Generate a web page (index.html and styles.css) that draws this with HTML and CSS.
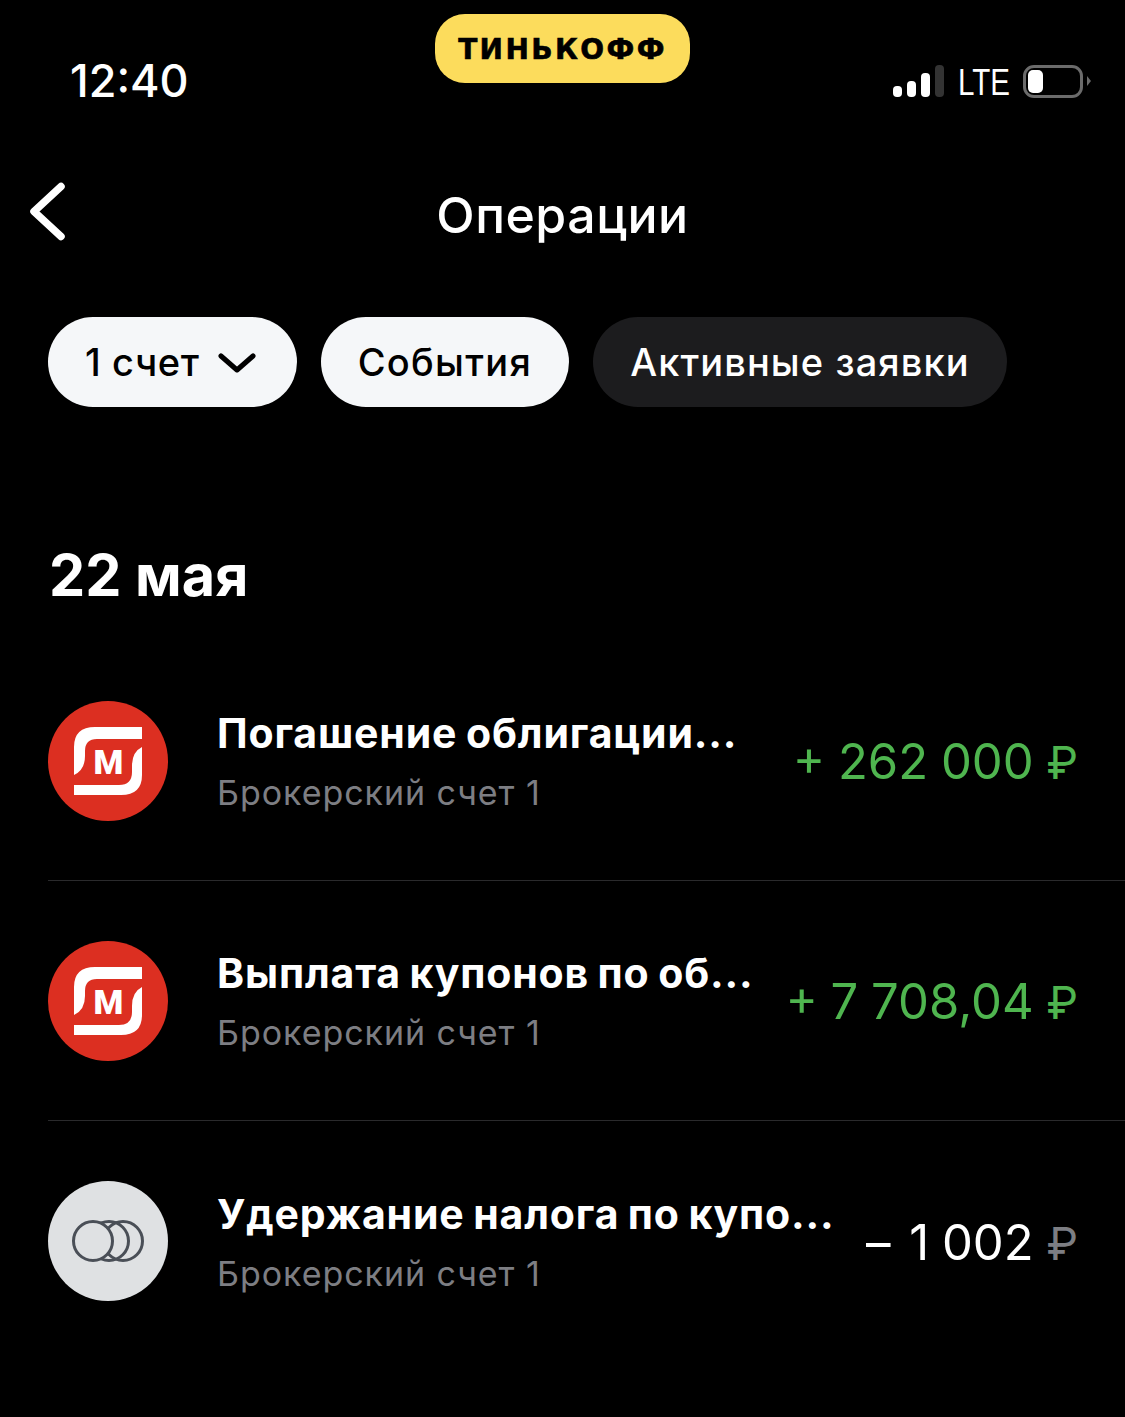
FILE: index.html
```html
<!DOCTYPE html>
<html lang="en">
<head>
    <meta charset="UTF-8">
    <meta name="viewport" content="width=device-width, initial-scale=1.0">
    <title>Операции</title>
    <link rel="stylesheet" href="styles.css">
</head>
<body>
    <div class="status-bar">
        <div class="time">12:40</div>
        <div class="brand">ТИНЬКОФФ</div>
        <div class="status-icons">
            <div class="signal">
                <span class="bar bar-1"></span>
                <span class="bar bar-2"></span>
                <span class="bar bar-3"></span>
                <span class="bar bar-4"></span>
            </div>
            <span class="lte">LTE</span>
            <div class="battery"><span class="battery-level"></span></div>
            <span class="battery-tip"></span>
        </div>
    </div>

    <header class="top-nav">
        <svg class="back" width="40" height="64" viewBox="0 0 40 64">
            <path d="M33 7.5 L6 32.5 L33 57.5" fill="none" stroke="#fff" stroke-width="7.5" stroke-linecap="round" stroke-linejoin="round"/>
        </svg>
        <h1>Операции</h1>
    </header>

    <nav class="chips">
        <div class="chip chip-light chip-account">1 счет
            <svg class="chip-arrow" width="38" height="20" viewBox="0 0 38 20">
                <path d="M3 3 L19 17 L35 3" fill="none" stroke="#000" stroke-width="5" stroke-linecap="round" stroke-linejoin="round"/>
            </svg>
        </div>
        <div class="chip chip-light">События</div>
        <div class="chip chip-dark">Активные заявки</div>
    </nav>

    <h2 class="date">22 мая</h2>

    <ul class="operations">
        <li class="operation">
            <svg class="logo" width="120" height="120" viewBox="0 0 120 120">
                <circle cx="60" cy="60" r="60" fill="#dc2f21"/>
                <path d="M94 26 H47 Q26 26 26 46 V74 Q37 69 37 55 V50 Q37 38 49 38 H94 Z" fill="#fff"/>
                <path d="M26 94 H73 Q94 94 94 74 V46 Q84 51 84 65 V71 Q84 84 71 84 H26 Z" fill="#fff"/>
                <text class="logo-letter" x="60.5" y="73" text-anchor="middle">М</text>
            </svg>
            <div class="operation-text">
                <div class="operation-title">Погашение облигации...</div>
                <div class="operation-sub">Брокерский счет 1</div>
            </div>
            <div class="amount amount-plus">+ 262 000 <span class="currency">₽</span></div>
        </li>
        <li class="operation">
            <svg class="logo" width="120" height="120" viewBox="0 0 120 120">
                <circle cx="60" cy="60" r="60" fill="#dc2f21"/>
                <path d="M94 26 H47 Q26 26 26 46 V74 Q37 69 37 55 V50 Q37 38 49 38 H94 Z" fill="#fff"/>
                <path d="M26 94 H73 Q94 94 94 74 V46 Q84 51 84 65 V71 Q84 84 71 84 H26 Z" fill="#fff"/>
                <text class="logo-letter" x="60.5" y="73" text-anchor="middle">М</text>
            </svg>
            <div class="operation-text">
                <div class="operation-title">Выплата купонов по об...</div>
                <div class="operation-sub">Брокерский счет 1</div>
            </div>
            <div class="amount amount-plus">+ 7 708,04 <span class="currency">₽</span></div>
        </li>
        <li class="operation">
            <svg class="logo" width="120" height="120" viewBox="0 0 120 120">
                <circle cx="60" cy="60" r="60" fill="#dfe1e3"/>
                <g fill="none" stroke="#4a4f57" stroke-width="3">
                    <circle cx="75" cy="60" r="19.5"/>
                    <circle cx="61" cy="60" r="19.5"/>
                    <circle cx="45" cy="60" r="19.5" fill="#dfe1e3"/>
                </g>
            </svg>
            <div class="operation-text">
                <div class="operation-title">Удержание налога по купо...</div>
                <div class="operation-sub">Брокерский счет 1</div>
            </div>
            <div class="amount"><span class="minus">–</span> 1 002 <span class="currency currency-dim">₽</span></div>
        </li>
    </ul>
</body>
</html>
```

FILE: styles.css
```css
body {
    font-family: Inter, Roboto, "Noto Sans", sans-serif;
    background-color: #000;
    color: #fff;
    margin: 0;
    padding: 0;
    height: 1417px;
    overflow: hidden;
}

.status-bar {
    display: grid;
    grid-template-columns: 1fr 255px 1fr;
    height: 150px;
    padding: 14px 0 0;
    box-sizing: border-box;
}

.time {
    font-size: 45px;
    font-weight: 500;
    line-height: 52px;
    padding: 41px 0 0 70px;
}

.brand {
    height: 69px;
    box-sizing: border-box;
    padding-top: 1px;
    background-color: #fcdc5c;
    border-radius: 30px;
    color: #000;
    font-family: "DejaVu Sans", Arial, sans-serif;
    font-size: 28px;
    font-weight: 700;
    -webkit-text-stroke: 0.6px #000;
    letter-spacing: 2.4px;
    display: flex;
    justify-content: center;
    align-items: center;
}

.status-icons {
    display: flex;
    align-items: flex-start;
    padding: 51px 0 0 203px;
}

.signal {
    display: flex;
    align-items: flex-end;
    gap: 5px;
    height: 32px;
    width: 52px;
}

.bar {
    width: 9px;
    border-radius: 4px;
    background-color: #fff;
}

.bar-1 { height: 11px; }
.bar-2 { height: 16px; }
.bar-3 { height: 24px; }
.bar-4 { height: 32px; background-color: #333; }

.lte {
    font-family: "Liberation Sans", Arial, sans-serif;
    font-size: 36px;
    line-height: 36px;
    margin: 0 0 0 13px;
    width: 65px;
    transform: scaleX(0.82);
    transform-origin: left center;
}

.battery {
    box-sizing: border-box;
    width: 60px;
    height: 33px;
    border: 3px solid #6b6b6b;
    border-radius: 11px;
    padding: 2px;
}

.battery-level {
    display: block;
    width: 15px;
    height: 23px;
    border-radius: 5px;
    background-color: #fff;
}

.battery-tip {
    width: 0;
    height: 0;
    margin: 11px 0 0 4px;
    border-left: 4px solid #6b6b6b;
    border-top: 5px solid transparent;
    border-bottom: 5px solid transparent;
}

.top-nav {
    position: relative;
    height: 132px;
    display: flex;
    justify-content: center;
    align-items: center;
}

.back {
    position: absolute;
    left: 28px;
    top: 29px;
}

h1 {
    margin: 0 0 2px;
    font-size: 50px;
    font-weight: 500;
    letter-spacing: 0.5px;
    line-height: 130px;
}

.chips {
    display: flex;
    gap: 24px;
    padding: 35px 0 0 48px;
}

.chip {
    height: 90px;
    box-sizing: border-box;
    padding: 0 37px;
    border-radius: 45px;
    display: flex;
    align-items: center;
    font-size: 38px;
    font-weight: 500;
    letter-spacing: 1.3px;
}

.chip-light {
    background-color: #f5f7f9;
    color: #000;
}

.chip-account {
    letter-spacing: 0.6px;
}

.chip-dark {
    background-color: #1c1c1e;
    color: #fff;
    letter-spacing: 1.1px;
}

.chip-arrow {
    margin: 2px 4px 0 18px;
}

.date {
    margin: 0;
    padding: 130px 0 0 49px;
    font-size: 57.5px;
    font-weight: 700;
    line-height: 76px;
}

.operations {
    list-style: none;
    margin: 28px 0 0 48px;
    padding: 0;
}

.operation {
    display: flex;
    align-items: center;
    height: 240px;
    box-sizing: border-box;
    padding: 0 47px 0 0;
    border-bottom: 1px solid #2a2a2c;
}

.operation:last-child {
    border-bottom: none;
}

.logo {
    flex-shrink: 0;
    margin-right: 49px;
}

.logo-letter {
    font-family: Roboto, Arial, sans-serif;
    font-size: 34px;
    font-weight: 900;
    fill: #fff;
}

.operation-text {
    flex: 1;
    min-width: 0;
    white-space: nowrap;
    padding-top: 4px;
}

.operation-title {
    font-size: 41px;
    font-weight: 700;
    letter-spacing: 0.85px;
    word-spacing: -2px;
    line-height: 50px;
}

.operation-sub {
    margin-top: 11px;
    font-size: 34px;
    letter-spacing: 0.95px;
    line-height: 48px;
    color: #7d7e83;
}

.amount {
    margin-top: 4px;
    font-size: 49px;
    word-spacing: -1px;
    line-height: 60px;
    white-space: nowrap;
}

.amount-plus {
    color: #4fb54f;
}

.minus {
    margin-right: 6px;
}

.currency {
    font-size: 45px;
}

.currency-dim {
    color: #7d7e83;
}
```
